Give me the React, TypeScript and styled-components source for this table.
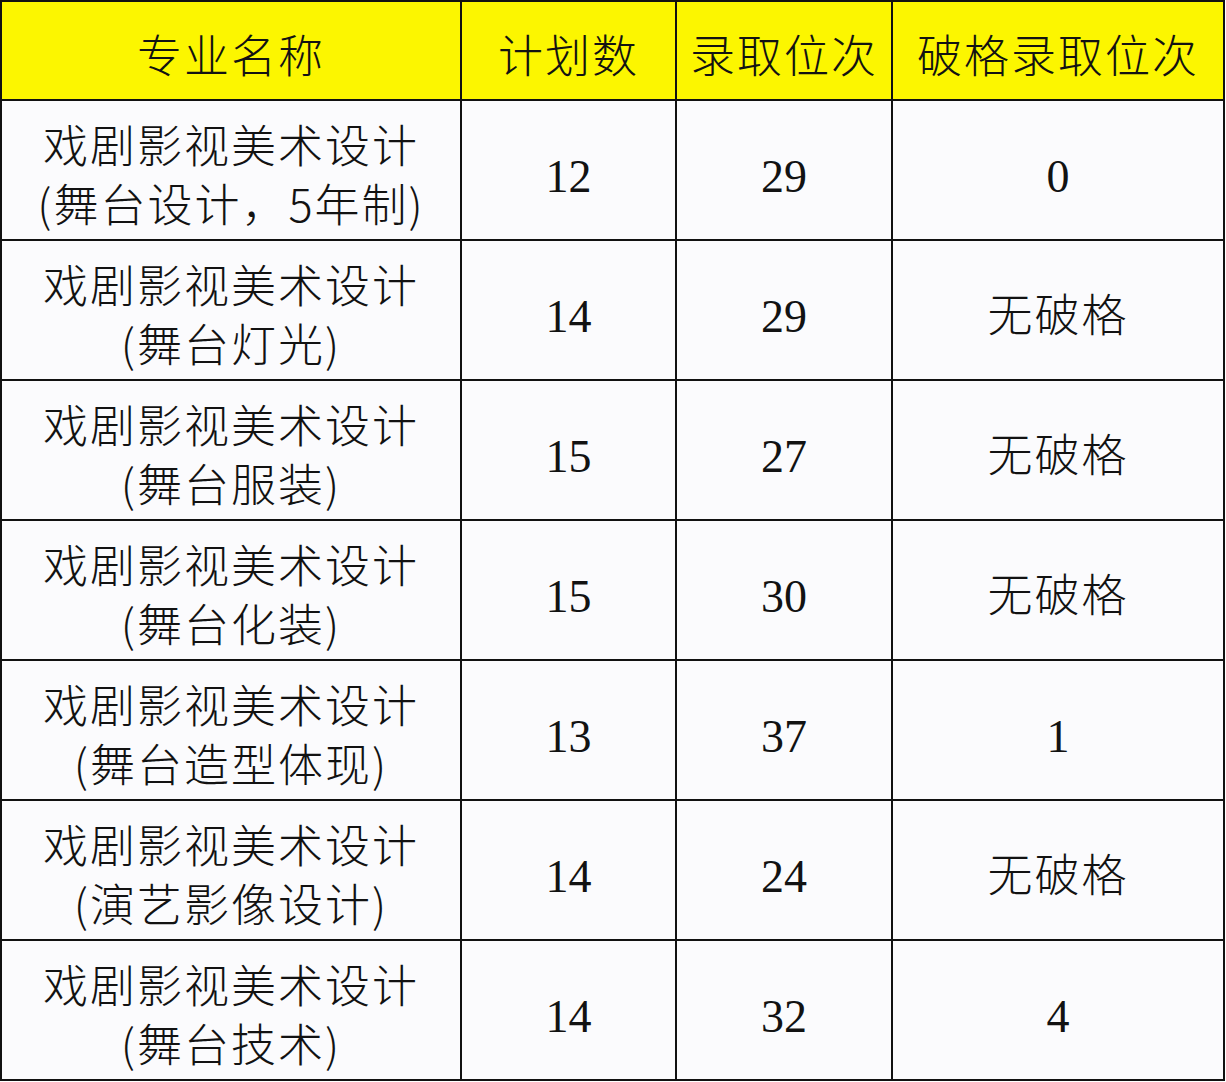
import React from "react";
import styled, { createGlobalStyle } from "styled-components";

const Global = createGlobalStyle`
  html, body { margin: 0; padding: 0; background: #ffffff; }
  body { width: 1226px; height: 1082px; overflow: hidden; }
`;

const Table = styled.div`
  display: grid;
  grid-template-columns: 458px 213px 214px 330px;
  grid-template-rows: 97px repeat(7, 138px);
  gap: 2px;
  padding: 2px;
  width: 1225px;
  box-sizing: border-box;
  background: #111111;
`;

const Cell = styled.div<{ $head?: boolean; $serif?: boolean }>`
  display: flex;
  flex-direction: column;
  align-items: center;
  justify-content: center;
  box-sizing: border-box;
  padding-top: ${(p) => (p.$head ? "6px" : p.$serif ? "12px" : "5px")};
  background: ${(p) => (p.$head ? "#fcf600" : "#fbfbfd")};
  color: #121212;
  font-family: ${(p) =>
    p.$serif
      ? `"Liberation Serif", "Noto Sans CJK SC", serif`
      : `"Noto Sans CJK SC", "Noto Sans", sans-serif`};
  font-size: ${(p) => (p.$serif ? "46px" : "45px")};
  font-weight: ${(p) => (p.$serif ? 400 : 300)};
  letter-spacing: ${(p) => (p.$serif ? "0" : "2px")};
  line-height: 59px;
  text-align: center;
  white-space: nowrap;
`;

const Line = styled.span`
  display: block;
`;

const rows: [string, string, string, string, string][] = [
  ["戏剧影视美术设计", "(舞台设计，5年制)", "12", "29", "0"],
  ["戏剧影视美术设计", "(舞台灯光)", "14", "29", "无破格"],
  ["戏剧影视美术设计", "(舞台服装)", "15", "27", "无破格"],
  ["戏剧影视美术设计", "(舞台化装)", "15", "30", "无破格"],
  ["戏剧影视美术设计", "(舞台造型体现)", "13", "37", "1"],
  ["戏剧影视美术设计", "(演艺影像设计)", "14", "24", "无破格"],
  ["戏剧影视美术设计", "(舞台技术)", "14", "32", "4"],
];

export default function App() {
  return (
    <>
      <Global />
      <Table>
        <Cell $head>专业名称</Cell>
        <Cell $head>计划数</Cell>
        <Cell $head>录取位次</Cell>
        <Cell $head>破格录取位次</Cell>
        {rows.map((r, i) => (
          <React.Fragment key={i}>
            <Cell>
              <Line>{r[0]}</Line>
              <Line>{r[1]}</Line>
            </Cell>
            <Cell $serif>{r[2]}</Cell>
            <Cell $serif>{r[3]}</Cell>
            <Cell $serif={/^\d+$/.test(r[4])}>{r[4]}</Cell>
          </React.Fragment>
        ))}
      </Table>
    </>
  );
}
